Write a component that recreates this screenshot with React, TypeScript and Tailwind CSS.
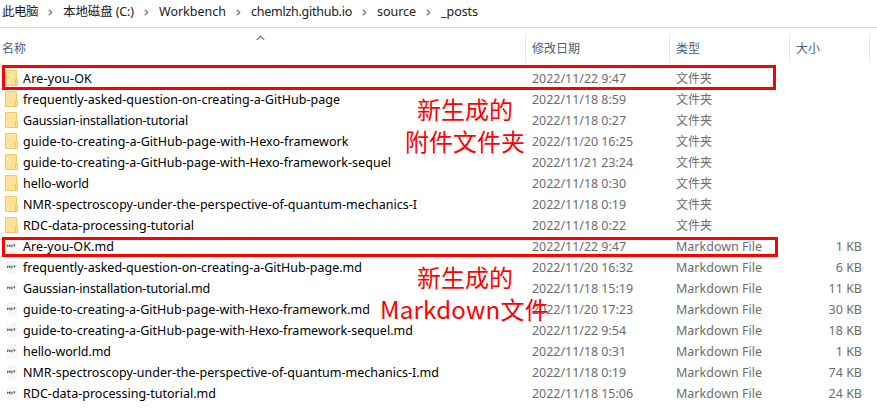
import { useLayoutEffect, useRef, useState } from "react";
import type { ReactNode } from "react";

const folders: [string, number, string][] = [
  ["Are-you-OK", 69, "2022/11/22 9:47"],
  ["frequently-asked-question-on-creating-a-GitHub-page", 317, "2022/11/18 8:59"],
  ["Gaussian-installation-tutorial", 165, "2022/11/18 0:27"],
  ["guide-to-creating-a-GitHub-page-with-Hexo-framework", 325.5, "2022/11/20 16:25"],
  ["guide-to-creating-a-GitHub-page-with-Hexo-framework-sequel", 368, "2022/11/21 23:24"],
  ["hello-world", 66, "2022/11/18 0:30"],
  ["NMR-spectroscopy-under-the-perspective-of-quantum-mechanics-I", 394, "2022/11/18 0:19"],
  ["RDC-data-processing-tutorial", 171, "2022/11/18 0:22"],
];

const files: [string, number, string, string][] = [
  ["Are-you-OK.md", 91, "2022/11/22 9:47", "1 KB"],
  ["frequently-asked-question-on-creating-a-GitHub-page.md", 339, "2022/11/20 16:32", "6 KB"],
  ["Gaussian-installation-tutorial.md", 187, "2022/11/18 15:19", "11 KB"],
  ["guide-to-creating-a-GitHub-page-with-Hexo-framework.md", 347, "2022/11/20 17:23", "30 KB"],
  ["guide-to-creating-a-GitHub-page-with-Hexo-framework-sequel.md", 390, "2022/11/22 9:54", "18 KB"],
  ["hello-world.md", 88, "2022/11/18 0:31", "1 KB"],
  ["NMR-spectroscopy-under-the-perspective-of-quantum-mechanics-I.md", 416, "2022/11/18 0:19", "74 KB"],
  ["RDC-data-processing-tutorial.md", 193, "2022/11/18 15:06", "24 KB"],
];

/* Spaces the letters so that the text spans the given width. */
function Fit({ text, width }: { text: string; width: number }) {
  const ref = useRef<HTMLSpanElement>(null);
  const [spacing, setSpacing] = useState(0);
  useLayoutEffect(() => {
    if (ref.current) {
      const natural = ref.current.getBoundingClientRect().width - spacing * text.length;
      setSpacing((width - natural) / text.length);
    }
  }, [text, width]);
  return (
    <span ref={ref} className="inline-block whitespace-nowrap" style={{ letterSpacing: `${spacing}px` }}>
      {text}
    </span>
  );
}

function FolderIcon() {
  return (
    <svg width="14" height="17" viewBox="0 0 14 17" className="block shrink-0">
      <path d="M.5.5h11v15H.5z" fill="#ffe294" stroke="#f0cb60" />
      <path d="M10.5 9.5h2v6h-2z" fill="#ffe294" stroke="#efc858" />
    </svg>
  );
}

function MarkdownIcon() {
  return (
    <svg width="14" height="17" viewBox="0 0 14 17" className="block shrink-0">
      <path d="M1.5 2 9.5 1l2.5 2v12l-9.5 1z" fill="#f6f6f6" />
      <path d="m9.5 1 .2 2.2L12 3z" fill="#e9e9e9" />
      <path d="M2.5 9V6.8l1 1.2 1-1.2V9M6 6.9V9h.7l.6-1-.6-1.1zM9.3 6v2.6M8.3 7.2h2" fill="none" stroke="#666" strokeWidth=".95" />
    </svg>
  );
}

function Row({ icon, name, width, date, type, size }: { icon: ReactNode; name: string; width: number; date: string; type: ReactNode; size?: string }) {
  return (
    <div className="flex h-[21px] items-center text-[#6d6d6d]">
      <div className="flex w-[532px] items-center text-black">
        <div className="w-[23px] pl-[5px]">{icon}</div>
        <Fit text={name} width={width} />
      </div>
      <div className="w-[144px]">
        <Fit text={date} width={date.length === 15 ? 94 : 101} />
      </div>
      <div className="w-[100px]">{type}</div>
      <div className="w-[86px] text-right">{size}</div>
    </div>
  );
}

function Chevron() {
  return (
    <svg width="5" height="7" viewBox="0 0 5 7" className="mt-px block">
      <path d="M.8.8 3.6 3.5.8 6.2" fill="none" stroke="#777" strokeWidth="1.3" />
    </svg>
  );
}

function Crumb({ children, cell }: { children: ReactNode; cell: string }) {
  return <div className={`flex shrink-0 items-center ${cell}`}>{children}</div>;
}

export default function App() {
  return (
    <div className="relative h-[413px] w-[877px] overflow-hidden bg-white font-['Noto_Sans','Noto_Sans_CJK_SC',sans-serif] text-[12.5px] leading-[21px]">
      <nav className="flex h-[28px] items-center border-b border-[#d9d9d9] pb-[4px] pl-[2px] text-[#202020]">
        <Crumb cell="w-[46px]"><Fit text="此电脑" width={36} /></Crumb>
        <Crumb cell="w-[15px]"><Chevron /></Crumb>
        <Crumb cell="w-[81px]"><Fit text="本地磁盘 (C:)" width={71} /></Crumb>
        <Crumb cell="w-[15px]"><Chevron /></Crumb>
        <Crumb cell="w-[77px]"><Fit text="Workbench" width={67} /></Crumb>
        <Crumb cell="w-[15px]"><Chevron /></Crumb>
        <Crumb cell="w-[111px]"><Fit text="chemlzh.github.io" width={101} /></Crumb>
        <Crumb cell="w-[15px]"><Chevron /></Crumb>
        <Crumb cell="w-[49px]"><Fit text="source" width={39} /></Crumb>
        <Crumb cell="w-[15px]"><Chevron /></Crumb>
        <Fit text="_posts" width={37} />
      </nav>

      <header className="flex h-[40px] pt-[6px] text-[12px] text-[#4c607a]">
        <div className="flex h-[28px] w-[526px] items-start justify-between border-r border-[#e5e5e5] pl-[2px]">
          <span className="pt-[4px]">名称</span>
          <svg width="9" height="6" viewBox="0 0 9 6" className="mr-[260px] mt-px">
            <path d="m.8 4.8 3.7-3.6 3.7 3.6" fill="none" stroke="#666" strokeWidth="1.1" />
          </svg>
        </div>
        <div className="h-[28px] w-[144px] border-r border-[#e5e5e5] pl-[6px] pt-[4px]">修改日期</div>
        <div className="h-[28px] w-[120px] border-r border-[#e5e5e5] pl-[6px] pt-[4px]">类型</div>
        <div className="h-[28px] w-[80px] border-r border-[#e5e5e5] pl-[6px] pt-[4px]">大小</div>
      </header>

      <main>
        {folders.map(([name, width, date]) => (
          <Row key={name} icon={<FolderIcon />} name={name} width={width} date={date} type={<span className="text-[12px]">文件夹</span>} />
        ))}
        {files.map(([name, width, date, size]) => (
          <Row key={name} icon={<MarkdownIcon />} name={name} width={width} date={date} type={<Fit text="Markdown File" width={86} />} size={size} />
        ))}
      </main>

      <div className="absolute left-[2px] top-[65px] h-[25px] w-[774px] border-[3px] border-[#ff0000]" />
      <div className="absolute left-[2px] top-[237px] h-[20px] w-[776px] border-[3px] border-[#ff0000]" />
      <div className="absolute left-[385px] top-[93px] w-[160px] text-center font-['Noto_Sans_CJK_SC',sans-serif] text-[24px] leading-[32px] text-[#ff0000]">
        <div>新生成的</div>
        <div>附件文件夹</div>
      </div>
      <div className="absolute left-[364px] top-[261px] w-[202px] text-center font-['Noto_Sans_CJK_SC',sans-serif] text-[24px] leading-[32px] text-[#ff0000]">
        <div>新生成的</div>
        <div className="-ml-px whitespace-nowrap"><Fit text="Markdown文件" width={169} /></div>
      </div>
    </div>
  );
}
